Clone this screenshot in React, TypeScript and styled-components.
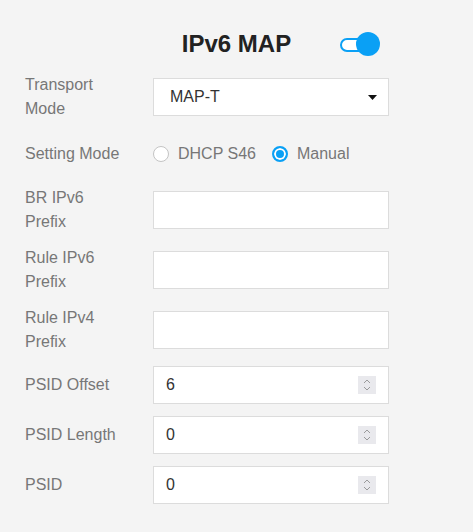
import React from "react";
import styled, { createGlobalStyle } from "styled-components";

const GlobalStyle = createGlobalStyle`
  html, body {
    margin: 0;
    background: #f4f4f4;
  }
  body {
    font-family: "Liberation Sans", Arial, sans-serif;
  }
`;

const Page = styled.div`
  width: 473px;
  min-height: 532px;
  box-sizing: border-box;
  padding-top: 26px;
`;

const Header = styled.div`
  display: grid;
  grid-template-columns: 1fr auto 1fr;
  align-items: center;
`;

const Title = styled.h1`
  grid-column: 2;
  margin: 0;
  font-size: 24px;
  line-height: 36px;
  font-weight: 700;
  color: #222;
`;

const Switch = styled.div`
  grid-column: 3;
  justify-self: start;
  position: relative;
  width: 40px;
  height: 24px;
  margin-left: 49px;
`;

const Track = styled.span`
  position: absolute;
  left: 0;
  top: 6px;
  width: 34px;
  height: 14px;
  box-sizing: border-box;
  border: 2px solid #0aa0f5;
  border-radius: 7px;
  background: #fff;
`;

const Knob = styled.span`
  position: absolute;
  right: 0;
  top: 0;
  width: 24px;
  height: 24px;
  border-radius: 50%;
  background: #0aa0f5;
`;

const Form = styled.div`
  display: flex;
  flex-direction: column;
  gap: 12px;
  margin-top: 11px;
  padding-left: 25px;
`;

const Row = styled.div<{ $minHeight?: number }>`
  display: flex;
  align-items: center;
  min-height: ${({ $minHeight }) => ($minHeight ? `${$minHeight}px` : "auto")};
`;

const Label = styled.div`
  width: 100px;
  margin-right: 28px;
  font-size: 16px;
  line-height: 24px;
  color: #777;
`;

const Box = styled.div`
  display: flex;
  align-items: center;
  width: 236px;
  height: 38px;
  box-sizing: border-box;
  border: 1px solid #dcdcdc;
  background: #fff;
`;

const SelectBox = styled(Box)`
  justify-content: space-between;
  padding: 0 11px 0 16px;
  font-size: 16px;
  color: #333;
`;

const TextInput = styled.input`
  flex: 1;
  min-width: 0;
  height: 100%;
  border: none;
  outline: none;
  background: transparent;
  padding: 0 0 0 12px;
  font-family: inherit;
  font-size: 16px;
  color: #333;
`;

const Spinner = styled.span`
  display: flex;
  flex-direction: column;
  align-items: center;
  justify-content: center;
  gap: 2px;
  width: 18px;
  height: 18px;
  margin-right: 12px;
  background: #e9e9ed;
`;

const RadioGroup = styled.div`
  display: flex;
  align-items: center;
`;

const RadioItem = styled.label`
  display: flex;
  align-items: center;
  margin-right: 16px;
  font-size: 16px;
  line-height: 24px;
  color: #777;
`;

const RadioDot = styled.span<{ $checked?: boolean }>`
  width: 16px;
  height: 16px;
  box-sizing: border-box;
  margin-right: 9px;
  border-radius: 50%;
  border: ${({ $checked }) => ($checked ? "2px solid #0aa0f5" : "1px solid #c4c4c4")};
  background: ${({ $checked }) => ($checked ? "#0aa0f5" : "#fff")};
  box-shadow: ${({ $checked }) => ($checked ? "inset 0 0 0 2px #fff" : "none")};
`;

const Chevron = ({ up }: { up?: boolean }) => (
  <svg width="8" height="5" viewBox="0 0 8 5">
    <path
      d={up ? "M1 4 L4 1 L7 4" : "M1 1 L4 4 L7 1"}
      fill="none"
      stroke="#9a9a9a"
      strokeWidth="1"
    />
  </svg>
);

const NumberField = ({ value }: { value: string }) => (
  <Box>
    <TextInput defaultValue={value} />
    <Spinner>
      <Chevron up />
      <Chevron />
    </Spinner>
  </Box>
);

const textRows = [
  ["BR IPv6", "Prefix"],
  ["Rule IPv6", "Prefix"],
  ["Rule IPv4", "Prefix"],
];

const numberRows = [
  { label: "PSID Offset", value: "6" },
  { label: "PSID Length", value: "0" },
  { label: "PSID", value: "0" },
];

export default function App() {
  return (
    <Page>
      <GlobalStyle />
      <Header>
        <Title>IPv6 MAP</Title>
        <Switch>
          <Track />
          <Knob />
        </Switch>
      </Header>

      <Form>
        <Row>
          <Label>Transport Mode</Label>
          <SelectBox>
            <span>MAP-T</span>
            <svg width="9" height="5" viewBox="0 0 9 5">
              <path d="M0 0 H9 L4.5 5 Z" fill="#111" />
            </svg>
          </SelectBox>
        </Row>

        <Row $minHeight={41}>
          <Label>Setting Mode</Label>
          <RadioGroup>
            <RadioItem>
              <RadioDot />
              DHCP S46
            </RadioItem>
            <RadioItem>
              <RadioDot $checked />
              Manual
            </RadioItem>
          </RadioGroup>
        </Row>

        {textRows.map(([a, b]) => (
          <Row key={a}>
            <Label>
              {a} {b}
            </Label>
            <Box>
              <TextInput />
            </Box>
          </Row>
        ))}

        {numberRows.map((r) => (
          <Row key={r.label}>
            <Label>{r.label}</Label>
            <NumberField value={r.value} />
          </Row>
        ))}
      </Form>
    </Page>
  );
}
